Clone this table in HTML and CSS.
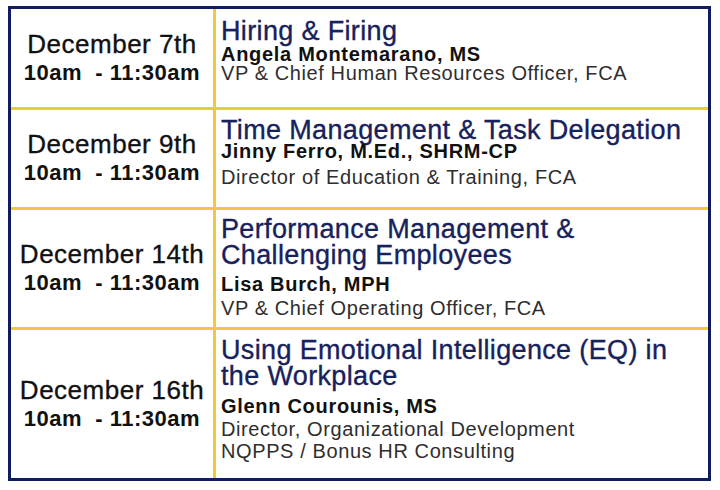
FILE: index.html
```html
<!DOCTYPE html>
<html>
<head>
<meta charset="utf-8">
<link rel="stylesheet" href="styles.css">
</head>
<body>
<div class="schedule">
  <div class="when">
    <div class="date">December 7th</div>
    <div class="time">10am&nbsp; - 11:30am</div>
  </div>
  <div class="what r1">
    <div class="title">Hiring &amp; Firing</div>
    <div class="name">Angela Montemarano, MS</div>
    <div class="role">VP &amp; Chief Human Resources Officer, FCA</div>
  </div>

  <div class="when">
    <div class="date">December 9th</div>
    <div class="time">10am&nbsp; - 11:30am</div>
  </div>
  <div class="what r2">
    <div class="title">Time Management &amp; Task Delegation</div>
    <div class="name">Jinny Ferro, M.Ed., SHRM-CP</div>
    <div class="role">Director of Education &amp; Training, FCA</div>
  </div>

  <div class="when">
    <div class="date">December 14th</div>
    <div class="time">10am&nbsp; - 11:30am</div>
  </div>
  <div class="what r3">
    <div class="title">Performance Management &amp;<br>Challenging Employees</div>
    <div class="name">Lisa Burch, MPH</div>
    <div class="role">VP &amp; Chief Operating Officer, FCA</div>
  </div>

  <div class="when">
    <div class="date">December 16th</div>
    <div class="time">10am&nbsp; - 11:30am</div>
  </div>
  <div class="what r4">
    <div class="title">Using Emotional Intelligence (EQ) in<br>the Workplace</div>
    <div class="name">Glenn Courounis, MS</div>
    <div class="role">Director, Organizational Development</div>
    <div class="role">NQPPS / Bonus HR Consulting</div>
  </div>
</div>
</body>
</html>
```

FILE: styles.css
```css
html, body {
  background: #ffffff;
}
body {
  margin: 6px 8px;
  font-family: "Liberation Sans", Arial, sans-serif;
}
.schedule {
  width: 697px;
  display: grid;
  grid-template-columns: 202px 1fr;
  grid-template-rows: 98px 97px 117px 148px;
  gap: 3px;
  background: #f0c93c;
  border: 3px solid #101c62;
}
.when, .what {
  background: #ffffff;
}
.when {
  display: flex;
  flex-direction: column;
  justify-content: center;
  align-items: center;
  color: #111111;
}
.date {
  font-size: 26px;
  line-height: 27px;
  letter-spacing: 0.5px;
  -webkit-text-stroke: 0.35px #111111;
}
.time {
  font-size: 22px;
  line-height: 26px;
  font-weight: bold;
  letter-spacing: 0.5px;
  margin-top: 2px;
  white-space: pre;
}
.what {
  padding-left: 5px;
  white-space: nowrap;
}
.title {
  font-size: 27px;
  line-height: 26px;
  letter-spacing: 0.35px;
  color: #17215c;
  -webkit-text-stroke: 0.35px #17215c;
}
.name {
  font-size: 20px;
  line-height: 20px;
  font-weight: bold;
  letter-spacing: 0.7px;
  color: #111111;
}
.role {
  font-size: 20px;
  line-height: 20px;
  letter-spacing: 0.6px;
  color: #2e2e2e;
}
.r1 { padding-top: 9px; }
.r1 .role { margin-top: -1px; }
.r2 { padding-top: 7px; }
.r2 .name { margin-top: -2px; }
.r2 .role { margin-top: 6px; }
.r3 { padding-top: 6px; }
.r3 .name { margin-top: 6px; }
.r3 .role { margin-top: 4px; }
.r4 { padding-top: 7px; }
.r4 .name { margin-top: 7px; }
.r4 .role { margin-top: 3px; }
.r4 .role + .role { margin-top: 2px; }
```
